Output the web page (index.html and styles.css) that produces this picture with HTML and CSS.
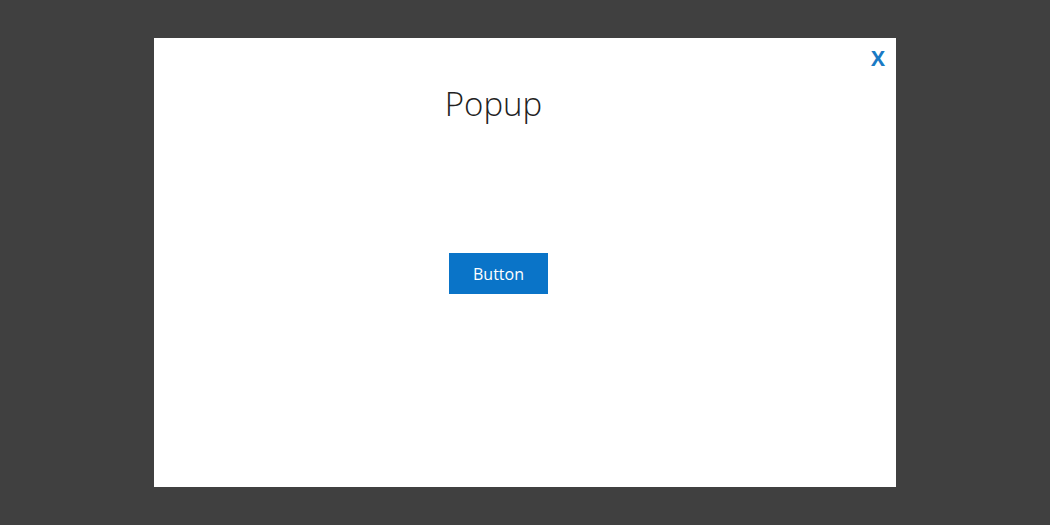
FILE: index.html
```html
<!DOCTYPE html>
<html>
<head>
<meta charset="utf-8">
<link rel="stylesheet" href="styles.css">
</head>
<body>
<div class="overlay">
  <div class="popup">
    <span class="close">X</span>
    <h1 class="title">Popup</h1>
    <button class="btn">Button</button>
  </div>
</div>
</body>
</html>
```
FILE: styles.css
```css
html, body {
  margin: 0;
  padding: 0;
  height: 100%;
}
body {
  background: #404040;
  font-family: "Open Sans", "Segoe UI", sans-serif;
}
.overlay {
  height: 525px;
  padding-top: 38px;
  box-sizing: border-box;
  display: flex;
  justify-content: center;
}
.popup {
  position: relative;
  width: 742px;
  height: 449px;
  background: #fff;
  display: flex;
  flex-direction: column;
  align-items: center;
  box-sizing: border-box;
}
.close {
  position: absolute;
  top: 8px;
  right: 11px;
  color: #1a7ac4;
  font-family: "Open Sans", sans-serif;
  font-weight: 700;
  font-size: 21px;
  line-height: 24px;
}
.title {
  margin: 44px 63px 0 0;
  font-weight: 300;
  font-size: 33px;
  line-height: 44px;
  color: #222;
}
.btn {
  margin: 127px 53px 0 0;
  width: 99px;
  height: 41px;
  border: none;
  background: #0a74c8;
  color: #fff;
  font-family: "Open Sans", sans-serif;
  font-size: 16px;
  padding: 0;
}
```
